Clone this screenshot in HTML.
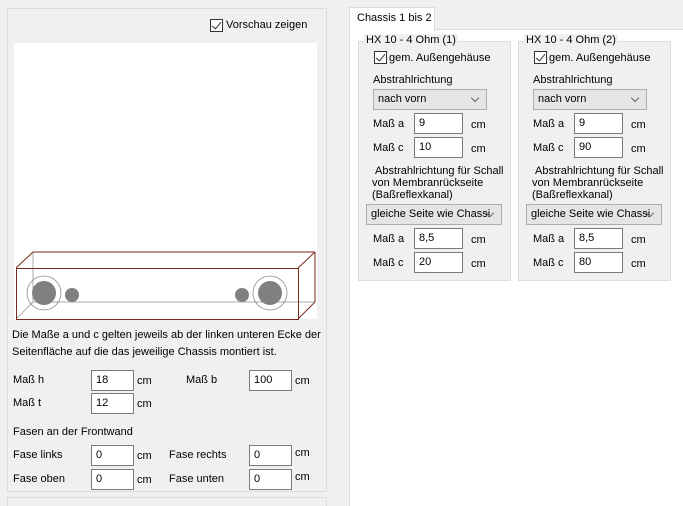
<!DOCTYPE html><html style="overflow:hidden;height:506px"><head><style>
body{margin:0;width:683px;height:506px;background:#f0f0f0;font:11px "Liberation Sans",sans-serif;color:#000;position:relative;overflow:hidden}
.a{position:absolute;white-space:nowrap}
.in{position:absolute;background:#fff;border:1px solid #7a7a7a;box-sizing:border-box;height:21px;padding:3px 0 0 4px;white-space:nowrap}
.cb{position:absolute;width:13px;height:13px;border:1px solid #333;box-sizing:border-box;background:#fff}
.cb:after{content:"";position:absolute;left:3px;top:0px;width:4px;height:8px;border:solid #333;border-width:0 1.5px 1.5px 0;transform:rotate(40deg)}
.dd{position:absolute;background:#e5e5e5;border:1px solid #adadad;box-sizing:border-box;height:21px;padding:3px 0 0 4px;white-space:nowrap;overflow:hidden}
.dd:after{content:"";position:absolute;right:8px;top:5px;width:5px;height:5px;border:solid #666;border-width:0 1px 1px 0;transform:rotate(45deg)}
.grp{position:absolute;border:1px solid #dcdcdc;background:#f0f0f0;box-sizing:border-box}
</style></head><body>
<div class="grp" style="left:7px;top:8px;width:320px;height:484px"></div>
<div class="grp" style="left:7px;top:497px;width:320px;height:9px;border-bottom:none"></div>
<div class="cb" style="left:210px;top:19px"></div><div class="a" style="left:226px;top:19px">Vorschau zeigen</div>
<div class="a" style="left:14px;top:43px;width:303px;height:276px;background:#fff"></div>
<svg class="a" style="left:0;top:0" width="330" height="330">
<g fill="none" stroke="#aaa"><line x1="33" y1="252" x2="33" y2="302"/><line x1="33" y1="302" x2="315" y2="302"/><line x1="16" y1="319" x2="33" y2="302"/></g>
<g fill="none" stroke="#7a2a1a"><rect x="16.5" y="268.5" width="282" height="51"/><line x1="16" y1="268" x2="33" y2="252"/><line x1="33" y1="252" x2="315" y2="252"/><line x1="298" y1="268" x2="315" y2="252"/><line x1="315" y1="252" x2="315" y2="302"/><line x1="298" y1="319" x2="315" y2="302"/></g>
<g fill="#808080"><circle cx="44" cy="293" r="12"/><circle cx="72" cy="295" r="7"/><circle cx="242" cy="295" r="7"/><circle cx="270" cy="293" r="12"/></g>
<g fill="none" stroke="#888" stroke-width="0.8"><circle cx="44" cy="293" r="17"/><circle cx="270" cy="293" r="17"/></g>
</svg>
<div class="a" style="left:12px;top:327px;line-height:17px">Die Maße a und c gelten jeweils ab der linken unteren Ecke der<br>Seitenfläche auf die das jeweilige Chassis montiert ist.</div>
<div class="a" style="left:13px;top:374px">Maß h</div><div class="in" style="left:91px;top:370px;width:43px">18</div><div class="a" style="left:137px;top:375px">cm</div>
<div class="a" style="left:186px;top:374px">Maß b</div><div class="in" style="left:249px;top:370px;width:43px">100</div><div class="a" style="left:295px;top:375px">cm</div>
<div class="a" style="left:13px;top:397px">Maß t</div><div class="in" style="left:91px;top:393px;width:43px">12</div><div class="a" style="left:137px;top:398px">cm</div>
<div class="a" style="left:13px;top:426px">Fasen an der Frontwand</div>
<div class="a" style="left:13px;top:449px">Fase links</div><div class="in" style="left:91px;top:445px;width:43px">0</div><div class="a" style="left:137px;top:450px">cm</div>
<div class="a" style="left:169px;top:449px">Fase rechts</div><div class="in" style="left:249px;top:445px;width:43px">0</div><div class="a" style="left:295px;top:447px">cm</div>
<div class="a" style="left:13px;top:473px">Fase oben</div><div class="in" style="left:91px;top:469px;width:43px">0</div><div class="a" style="left:137px;top:474px">cm</div>
<div class="a" style="left:169px;top:473px">Fase unten</div><div class="in" style="left:249px;top:469px;width:43px">0</div><div class="a" style="left:295px;top:471px">cm</div>
<div class="a" style="left:349px;top:29px;width:340px;height:480px;background:#fff;border:1px solid #dcdcdc"></div>
<div class="a" style="left:349px;top:7px;width:84px;height:23px;background:#fff;border:1px solid #dcdcdc;border-bottom:none"></div>
<div class="a" style="left:357px;top:12px">Chassis 1 bis 2</div>
<div>
<div class="grp" style="left:358px;top:41px;width:153px;height:240px"></div>
<div class="a" style="left:364px;top:34px;background:#f0f0f0;padding:0 2px">HX 10 - 4 Ohm (1)</div>
<div class="cb" style="left:374px;top:51px"></div><div class="a" style="left:389px;top:52px">gem. Außengehäuse</div>
<div class="a" style="left:373px;top:74px">Abstrahlrichtung</div>
<div class="dd" style="left:373px;top:89px;width:114px">nach vorn</div>
<div class="a" style="left:373px;top:118px">Maß a</div><div class="in" style="left:414px;top:113px;width:49px">9</div><div class="a" style="left:471px;top:119px">cm</div>
<div class="a" style="left:373px;top:142px">Maß c</div><div class="in" style="left:414px;top:137px;width:49px">10</div><div class="a" style="left:471px;top:143px">cm</div>
<div class="a" style="left:372px;top:165px;line-height:12px">&nbsp;Abstrahlrichtung für Schall<br>von Membranrückseite<br>(Baßreflexkanal)</div>
<div class="dd" style="left:366px;top:204px;width:136px">gleiche Seite wie Chassi</div>
<div class="a" style="left:373px;top:233px">Maß a</div><div class="in" style="left:414px;top:228px;width:49px">8,5</div><div class="a" style="left:471px;top:234px">cm</div>
<div class="a" style="left:373px;top:257px">Maß c</div><div class="in" style="left:414px;top:252px;width:49px">20</div><div class="a" style="left:471px;top:258px">cm</div>
</div>
<div style="position:absolute;left:160px;top:0">
<div class="grp" style="left:358px;top:41px;width:153px;height:240px"></div>
<div class="a" style="left:364px;top:34px;background:#f0f0f0;padding:0 2px">HX 10 - 4 Ohm (2)</div>
<div class="cb" style="left:374px;top:51px"></div><div class="a" style="left:389px;top:52px">gem. Außengehäuse</div>
<div class="a" style="left:373px;top:74px">Abstrahlrichtung</div>
<div class="dd" style="left:373px;top:89px;width:114px">nach vorn</div>
<div class="a" style="left:373px;top:118px">Maß a</div><div class="in" style="left:414px;top:113px;width:49px">9</div><div class="a" style="left:471px;top:119px">cm</div>
<div class="a" style="left:373px;top:142px">Maß c</div><div class="in" style="left:414px;top:137px;width:49px">90</div><div class="a" style="left:471px;top:143px">cm</div>
<div class="a" style="left:372px;top:165px;line-height:12px">&nbsp;Abstrahlrichtung für Schall<br>von Membranrückseite<br>(Baßreflexkanal)</div>
<div class="dd" style="left:366px;top:204px;width:136px">gleiche Seite wie Chassi</div>
<div class="a" style="left:373px;top:233px">Maß a</div><div class="in" style="left:414px;top:228px;width:49px">8,5</div><div class="a" style="left:471px;top:234px">cm</div>
<div class="a" style="left:373px;top:257px">Maß c</div><div class="in" style="left:414px;top:252px;width:49px">80</div><div class="a" style="left:471px;top:258px">cm</div>
</div>
</body></html>
